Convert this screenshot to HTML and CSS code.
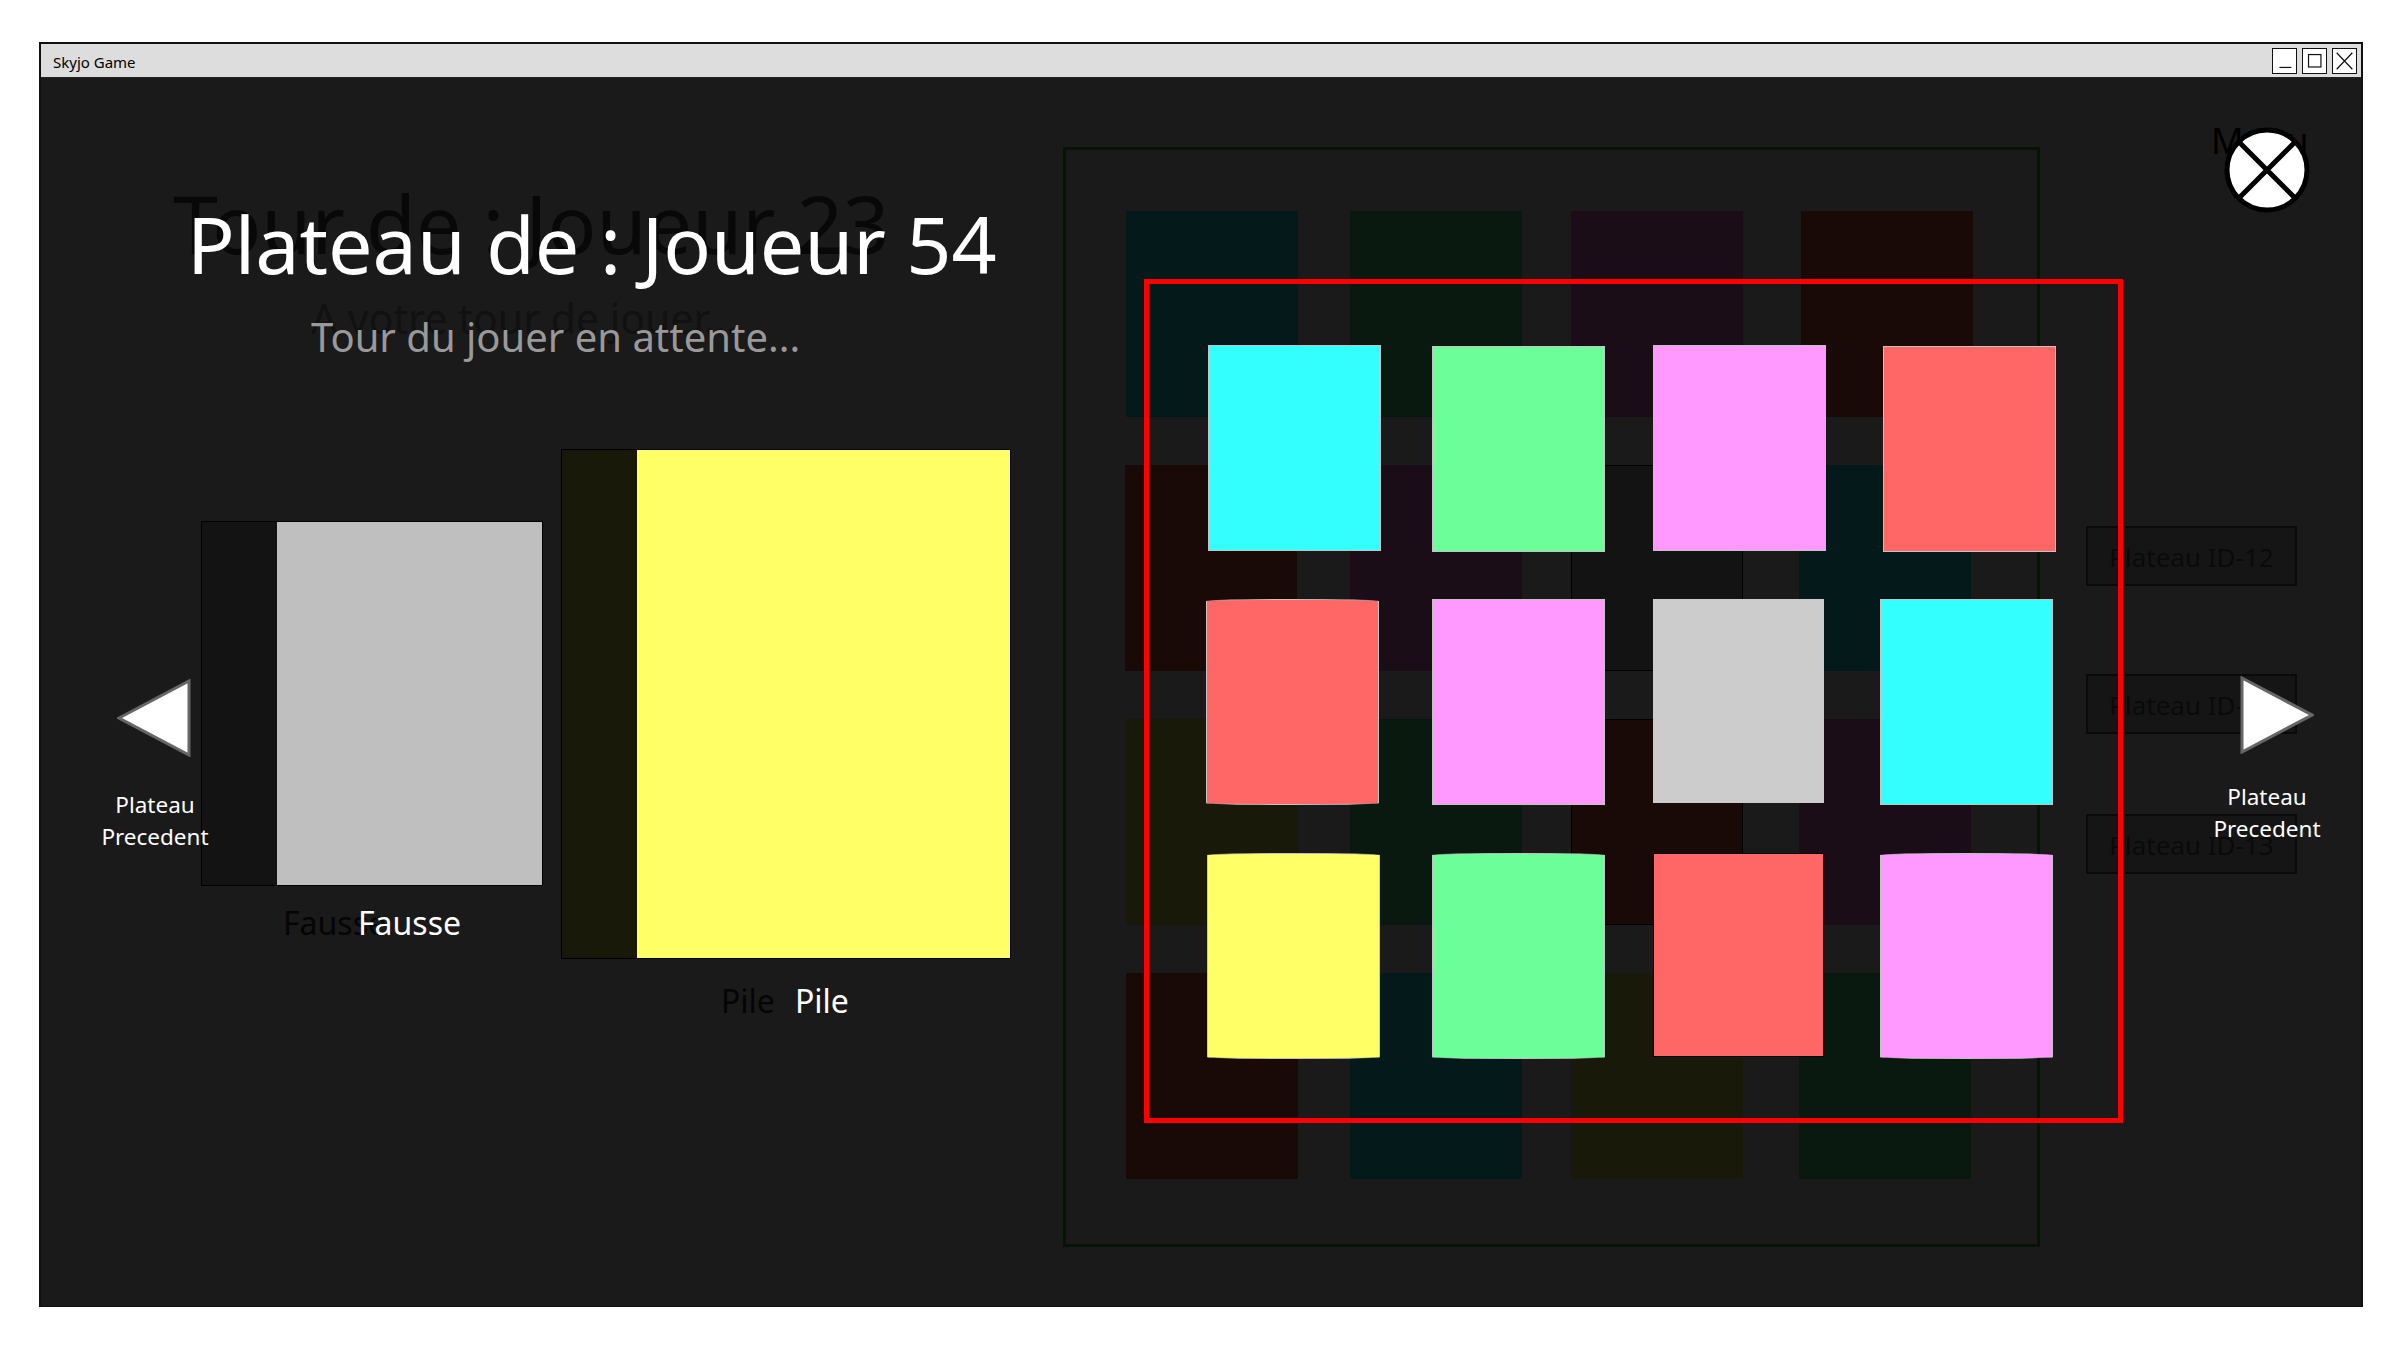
FILE: index.html
```html
<!DOCTYPE html>
<html lang="fr">
<head>
  <meta charset="UTF-8">
  <title>Skyjo Game</title>
  <link rel="stylesheet" href="styles.css">
</head>
<body>
  <div class="window">
    <div class="titlebar">
      <span class="titlebar-name">Skyjo Game</span>
      <div class="titlebar-buttons">
        <button class="win-btn"><svg viewBox="0 0 25 26"><path d="M7 20H20" /></svg></button>
        <button class="win-btn"><svg viewBox="0 0 25 26"><rect x="6" y="6" width="13.5" height="13.5" /></svg></button>
        <button class="win-btn"><svg viewBox="0 0 25 26"><path d="M4 4L21 22M21 4L4 22" /></svg></button>
      </div>
    </div>

    <div class="canvas">
      <!-- ecran du dessous, presque masque -->
      <h1 class="back-title">Tour de : Joueur 23</h1>
      <p class="back-sub">A votre tour de jouer...</p>
      <span class="back-menu">Menu</span>
      <span class="label-back label-fausse">Fausse</span>
      <span class="label-back label-pile">Pile</span>

      <div class="back-board">
        <div class="back-card dim-cyan"></div>
        <div class="back-card dim-green"></div>
        <div class="back-card dim-purple"></div>
        <div class="back-card dim-red"></div>
        <div class="back-card dim-red"></div>
        <div class="back-card dim-purple"></div>
        <div class="back-card dim-grey"></div>
        <div class="back-card dim-cyan"></div>
        <div class="back-card dim-yellow"></div>
        <div class="back-card dim-green"></div>
        <div class="back-card dim-red outlined"></div>
        <div class="back-card dim-purple"></div>
        <div class="back-card dim-red"></div>
        <div class="back-card dim-cyan"></div>
        <div class="back-card dim-yellow"></div>
        <div class="back-card dim-green"></div>
      </div>

      <div class="plateau-btn plateau-1">Plateau ID-12</div>
      <div class="plateau-btn plateau-2">Plateau ID-12</div>
      <div class="plateau-btn plateau-3">Plateau ID-13</div>

      <!-- ecran du dessus -->
      <h1 class="title">Plateau de : Joueur 54</h1>
      <p class="subtitle">Tour du jouer en attente...</p>

      <div class="pile pile-fausse">
        <div class="pile-side side-dark"></div>
        <div class="pile-face face-grey"></div>
      </div>
      <div class="pile pile-main">
        <div class="pile-side side-yellow"></div>
        <div class="pile-face face-yellow"></div>
      </div>
      <span class="label label-fausse-top">Fausse</span>
      <span class="label label-pile-top">Pile</span>

      <div class="board">
        <div class="card cyan"></div>
        <div class="card green"></div>
        <div class="card purple"></div>
        <div class="card red"></div>
        <div class="card red bowed"></div>
        <div class="card purple"></div>
        <div class="card grey"></div>
        <div class="card cyan"></div>
        <div class="card yellow bowed"></div>
        <div class="card green bowed"></div>
        <div class="card red dark-edge"></div>
        <div class="card purple bowed"></div>
      </div>

      <button class="nav nav-prev">
        <svg viewBox="0 0 74 78"><polygon points="2,39 72,2 72,76" /></svg>
      </button>
      <span class="nav-label nav-label-prev">Plateau<br>Precedent</span>

      <button class="nav nav-next">
        <svg viewBox="0 0 74 78"><polygon points="2,2 72,39 2,76" /></svg>
      </button>
      <span class="nav-label nav-label-next">Plateau<br>Precedent</span>

      <button class="close-btn">
        <svg viewBox="0 0 90 90">
          <circle cx="45" cy="45" r="40" />
          <path d="M17 17L73 73M73 17L17 73" />
        </svg>
      </button>
    </div>
  </div>
</body>
</html>
```

FILE: styles.css
```css
body {
  margin: 0;
  height: 1350px;
  background-color: #ffffff;
  font-family: "Comic Sans MS", "Noto Sans", sans-serif;
  overflow: hidden;
}

h1, p {
  margin: 0;
  font-weight: normal;
}

button {
  padding: 0;
  border: none;
  background: none;
}

.window {
  display: flex;
  flex-direction: column;
  width: 2324px;
  height: 1265px;
  margin: 42px 0 0 39px;
  border: 2px solid #111111;
  border-bottom-width: 1px;
  box-sizing: border-box;
  background-color: #1a1a1a;
}

.titlebar {
  display: flex;
  align-items: center;
  justify-content: space-between;
  height: 33px;
  padding: 0 4px 0 12px;
  background-color: #dddddd;
  border-bottom: 1px solid #222222;
}

.titlebar-name {
  font-size: 15px;
  line-height: 20px;
  padding-top: 2px;
  color: #000000;
}

.titlebar-buttons {
  display: flex;
  gap: 5px;
}

.win-btn {
  width: 25px;
  height: 26px;
  background-color: #ffffff;
  border: 1px solid #111111;
  box-sizing: border-box;
}

.win-btn svg {
  display: block;
  width: 100%;
  height: 100%;
  fill: none;
  stroke: #111111;
  stroke-width: 1.3;
}

.canvas {
  position: relative;
  flex: 1;
}

/* ecran du dessous */
.back-title,
.title {
  position: absolute;
  line-height: 90px;
  white-space: nowrap;
}

.back-title {
  left: 132px;
  top: 100px;
  font-size: 81px;
  color: #080808;
}

.back-sub,
.subtitle {
  position: absolute;
  line-height: 50px;
  white-space: nowrap;
}

.back-sub {
  left: 270px;
  top: 215px;
  font-size: 41px;
  color: #111111;
}

.back-menu {
  position: absolute;
  left: 2170px;
  top: 38px;
  font-size: 36px;
  line-height: 50px;
  color: #000000;
}

.label-back {
  position: absolute;
  font-size: 32px;
  line-height: 44px;
  color: #050505;
}

.label-fausse {
  left: 242px;
  top: 823px;
}

.label-pile {
  left: 680px;
  top: 901px;
}

.back-board {
  position: absolute;
  left: 1022px;
  top: 69px;
  display: grid;
  grid-template-columns: 224px 221px 228px 172px;
  grid-auto-rows: 254px;
  width: 977px;
  height: 1100px;
  padding: 61px 0 0 60px;
  border: 3px solid #051405;
  box-sizing: border-box;
}

.back-card {
  width: 172px;
  height: 206px;
  box-sizing: border-box;
}

.back-card:nth-child(4) {
  margin-left: 2px;
}

.back-card:nth-child(5) {
  margin-left: -1px;
}

.dim-cyan { background-color: #04191a; }
.dim-green { background-color: #0a190f; }
.dim-purple { background-color: #1a0d18; }
.dim-red { background-color: #190a08; }
.dim-yellow { background-color: #191909; }

.dim-grey {
  background-color: #131313;
  border: 1px solid #000000;
}

.outlined {
  border: 1px solid #000000;
}

.plateau-btn {
  position: absolute;
  left: 2045px;
  width: 211px;
  height: 60px;
  border: 2px solid #0a0a0a;
  box-sizing: border-box;
  background-color: #151515;
  color: #0a0a0a;
  font-size: 26px;
  line-height: 58px;
  text-align: center;
}

.plateau-1 { top: 448px; }
.plateau-2 { top: 596px; }
.plateau-3 { top: 736px; }

/* ecran du dessus */
.title {
  left: 146px;
  top: 121px;
  font-size: 79px;
  color: #ffffff;
}

.subtitle {
  left: 270px;
  top: 234px;
  font-size: 40px;
  color: #999999;
}

.pile {
  position: absolute;
  display: flex;
  border: 1px solid #000000;
  box-sizing: border-box;
}

.pile-fausse {
  left: 160px;
  top: 443px;
  width: 342px;
  height: 365px;
}

.pile-main {
  left: 520px;
  top: 371px;
  width: 450px;
  height: 510px;
}

.pile-side {
  width: 75px;
}

.pile-face {
  flex: 1;
}

.side-dark { background-color: #131313; }
.side-yellow { background-color: #191909; }
.face-grey { background-color: #bfbfbf; }
.face-yellow { background-color: #ffff66; }

.label {
  position: absolute;
  font-size: 32px;
  line-height: 44px;
  color: #ffffff;
}

.label-fausse-top {
  left: 317px;
  top: 823px;
}

.label-pile-top {
  left: 754px;
  top: 901px;
}

.board {
  position: absolute;
  left: 1103px;
  top: 201px;
  display: grid;
  grid-template-columns: 225px 221px 227px 172px;
  grid-auto-rows: 254px;
  width: 979px;
  height: 844px;
  padding: 61px 0 0 58px;
  border: 5px solid #ff0000;
  box-sizing: border-box;
}

.card {
  width: 173px;
  height: 206px;
  border: 1px solid #c4c4c4;
  box-sizing: border-box;
}

.card:nth-child(1) {
  margin-left: 1px;
}

.card:nth-child(2),
.card:nth-child(4) {
  margin-top: 1px;
}

.card:nth-child(4) {
  margin-left: 3px;
}

.card:nth-child(5) {
  margin-left: -1px;
}

.card:nth-child(7),
.card:nth-child(11) {
  width: 171px;
  height: 204px;
}

.cyan { background-color: #33ffff; }
.green { background-color: #6cff99; }
.purple { background-color: #ff99ff; }
.red { background-color: #ff6666; }
.grey { background-color: #cccccc; border-color: #cccccc; }
.yellow { background-color: #ffff66; }

.bowed {
  border-radius: 50% / 2px;
}

.dark-edge {
  border-color: #000000;
}

.nav {
  position: absolute;
  width: 74px;
  height: 78px;
}

.nav svg {
  display: block;
  width: 100%;
  height: 100%;
  fill: #ffffff;
  stroke: #666666;
  stroke-width: 3;
}

.nav-prev {
  left: 76px;
  top: 601px;
}

.nav-next {
  left: 2199px;
  top: 598px;
}

.nav-label {
  position: absolute;
  font-size: 22.5px;
  line-height: 32px;
  color: #ffffff;
  text-align: center;
  white-space: nowrap;
  transform: translateX(-50%);
}

.nav-label-prev {
  left: 114px;
  top: 711px;
}

.nav-label-next {
  left: 2226px;
  top: 703px;
}

.close-btn {
  position: absolute;
  left: 2181px;
  top: 47px;
  width: 90px;
  height: 90px;
}

.close-btn svg {
  display: block;
  width: 100%;
  height: 100%;
  fill: #ffffff;
  stroke: #000000;
  stroke-width: 5;
}
```
